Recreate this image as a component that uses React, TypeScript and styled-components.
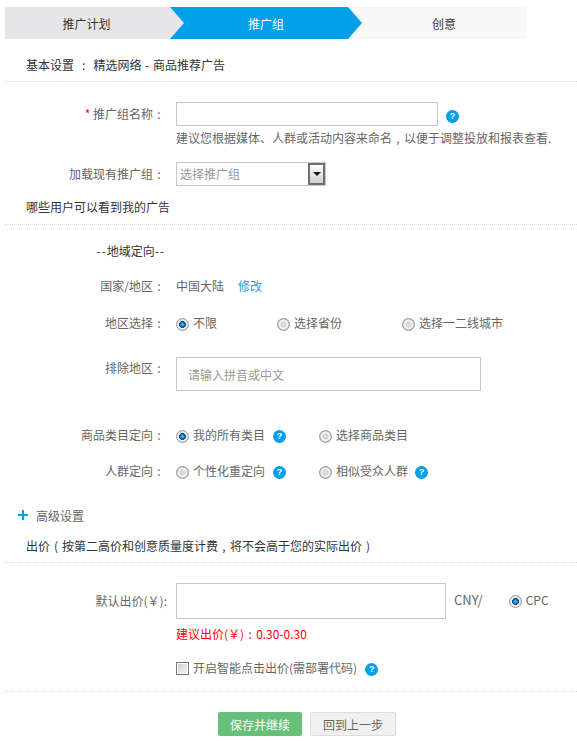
import styled, { createGlobalStyle } from 'styled-components';

const GlobalStyle = createGlobalStyle`
	html, body {
		margin: 0;
		padding: 0;
		background: #fff;
	}
	body {
		font-family: 'Noto Sans CJK SC', 'Liberation Sans', sans-serif;
		font-size: 12px;
		color: #666;
	}
`;

const App = () => (
	<>
		<GlobalStyle />
		<Page>
			<Steps>
				<Step $bg="#e6e6ea" $width="165px" $color="#333">
					推广计划
				</Step>
				<Step $bg="#00a0e9" $width="178px" $color="#fff" $offset>
					推广组
				</Step>
				<Step $bg="#f8f8f8" $color="#333" $offset $last>
					创意
				</Step>
			</Steps>

			<SectionTitle $top={16}>
				基本设置 <Punct>:</Punct> 精选网络 - 商品推荐广告
			</SectionTitle>

			<Row $top={20} $height={24}>
				<Label>
					<Required>*</Required> 推广组名称<Punct>:</Punct>
				</Label>
				<TextInput $width={262} />
				<HelpIcon $left={8} $down={8}>?</HelpIcon>
			</Row>
			<Hint>
				建议您根据媒体、人群或活动内容来命名<Punct>,</Punct>以便于调整投放和报表查看.
			</Hint>

			<Row $top={14} $height={24}>
				<Label>
					加载现有推广组<Punct>:</Punct>
				</Label>
				<SelectBox>
					<SelectText>选择推广组</SelectText>
					<SelectArrow />
				</SelectBox>
			</Row>

			<SectionTitle $top={11} $pad={7}>哪些用户可以看到我的广告</SectionTitle>

			<Row $top={16} $height={20}>
				<Label $dark>
					<Dash>--</Dash>地域定向<Dash>--</Dash>
				</Label>
			</Row>
			<Row $top={15} $height={20}>
				<Label>
					国家/地区<Punct>:</Punct>
				</Label>
				<span>中国大陆</span>
				<EditLink href="#">修改</EditLink>
			</Row>
			<Row $top={17} $height={20}>
				<Label>
					地区选择<Punct>:</Punct>
				</Label>
				<Option $width={101}>
					<Radio $checked />
					不限
				</Option>
				<Option $width={125}>
					<Radio />
					选择省份
				</Option>
				<Option>
					<Radio />
					选择一二线城市
				</Option>
			</Row>
			<Row $top={24} $height={34}>
				<Label $alignTop>
					排除地区<Punct>:</Punct>
				</Label>
				<TextInput $width={305} $pad={11} placeholder="请输入拼音或中文" />
			</Row>
			<Row $top={34} $height={20}>
				<Label>
					商品类目定向<Punct>:</Punct>
				</Label>
				<Option $width={143}>
					<Radio $checked />
					我的所有类目
					<HelpIcon $left={8} $down={5}>?</HelpIcon>
				</Option>
				<Option>
					<Radio />
					选择商品类目
				</Option>
			</Row>
			<Row $top={16} $height={20}>
				<Label>
					人群定向<Punct>:</Punct>
				</Label>
				<Option $width={143}>
					<Radio />
					个性化重定向
					<HelpIcon $left={8} $down={5}>?</HelpIcon>
				</Option>
				<Option>
					<Radio />
					相似受众人群
					<HelpIcon $left={7} $down={5}>?</HelpIcon>
				</Option>
			</Row>

			<Advanced>
				<PlusIcon viewBox="0 0 10 10">
					<path d="M4 0h2v4h4v2H6v4H4V6H0V4h4z" fill="#00a0e9" />
				</PlusIcon>
				高级设置
			</Advanced>

			<SectionTitle $top={11}>
				出价<Punct>(</Punct>按第二高价和创意质量度计费<Punct>,</Punct>将不会高于您的实际出价<Punct>)</Punct>
			</SectionTitle>

			<Row $top={20} $height={36}>
				<Label $wide>默认出价(￥):</Label>
				<TextInput $width={270} />
				<Unit>CNY/</Unit>
				<Option $top={7}>
					<Radio $checked />
					CPC
				</Option>
			</Row>
			<Suggest>
				建议出价(￥)<Punct>:</Punct>0.30-0.30
			</Suggest>
			<Row $top={14} $height={20}>
				<Label />
				<Option>
					<Checkbox />
					开启智能点击出价(需部署代码)
					<HelpIcon $left={8} $down={5}>?</HelpIcon>
				</Option>
			</Row>

			<Divider />

			<Actions>
				<PrimaryButton>保存并继续</PrimaryButton>
				<SecondaryButton>回到上一步</SecondaryButton>
			</Actions>
		</Page>
	</>
);

const Page = styled.div`
	width: 577px;
	height: 741px;
	overflow: hidden;
	padding-top: 7px;
	box-sizing: border-box;
`;

const Steps = styled.div`
	display: flex;
	width: 521px;
	height: 32px;
	margin-left: 5px;
`;

const Step = styled.div<{ $bg: string; $color: string; $width?: string; $offset?: boolean; $last?: boolean }>`
	position: relative;
	display: flex;
	align-items: center;
	justify-content: center;
	box-sizing: border-box;
	flex: ${(props) => (props.$width ? `0 0 ${props.$width}` : '1')};
	padding-left: ${(props) => (props.$offset ? '14px' : '0')};
	padding-right: ${(props) => (props.$offset ? '0' : '2px')};
	background: ${(props) => props.$bg};
	color: ${(props) => props.$color};

	&::after {
		content: '';
		display: ${(props) => (props.$last ? 'none' : 'block')};
		position: absolute;
		left: 100%;
		top: 0;
		z-index: 1;
		border-style: solid;
		border-width: 16px 0 16px 14px;
		border-color: transparent transparent transparent ${(props) => props.$bg};
	}
`;

// punctuation centred in a full-width cell, as the original font draws it
const Punct = styled.span`
	display: inline-block;
	width: 12px;
	text-align: center;
`;

const SectionTitle = styled.div<{ $top: number; $pad?: number }>`
	margin: ${(props) => props.$top}px 0 0 5px;
	padding: 0 0 ${(props) => props.$pad ?? 6}px 21px;
	line-height: 20px;
	word-spacing: 1px;
	color: #333;
	border-bottom: 1px dotted #d8d8d8;
`;

const Row = styled.div<{ $top: number; $height: number }>`
	display: flex;
	align-items: flex-start;
	margin-top: ${(props) => props.$top}px;
	height: ${(props) => props.$height}px;
	line-height: 20px;
`;

const Label = styled.div<{ $dark?: boolean; $alignTop?: boolean; $wide?: boolean }>`
	flex: 0 0 ${(props) => (props.$wide ? '167px' : '165px')};
	margin-right: ${(props) => (props.$wide ? '9px' : '11px')};
	align-self: ${(props) => (props.$alignTop ? 'flex-start' : 'center')};
	margin-top: ${(props) => (props.$alignTop ? '1px' : '0')};
	text-align: right;
	color: ${(props) => (props.$dark ? '#333' : '#666')};
`;

const Dash = styled.span`
	letter-spacing: 1px;
`;

const Required = styled.span`
	color: #f00;
`;

const TextInput = styled.input<{ $width: number; $pad?: number }>`
	box-sizing: border-box;
	width: ${(props) => props.$width}px;
	height: 100%;
	margin: 0;
	padding: 0 ${(props) => props.$pad ?? 4}px;
	border: 1px solid #c8c8c8;
	outline: none;
	font: inherit;
	color: #666;

	&::placeholder {
		color: #999;
		opacity: 1;
	}
`;

const HelpIcon = styled.span<{ $left: number; $down: number }>`
	flex: none;
	display: inline-block;
	width: 13px;
	height: 13px;
	margin-left: ${(props) => props.$left}px;
	margin-top: ${(props) => props.$down}px;
	border-radius: 50%;
	background: #00a0e9;
	color: #fff;
	font: bold 9px/13px 'Liberation Sans', sans-serif;
	text-align: center;
`;

const Hint = styled.div`
	margin: 2px 0 0 176px;
	line-height: 20px;
	white-space: nowrap;
`;

const SelectBox = styled.div`
	display: flex;
	align-items: center;
	justify-content: space-between;
	box-sizing: border-box;
	width: 150px;
	height: 100%;
	padding: 0 0 0 3px;
	border: 1px solid #c8c8c8;
`;

const SelectText = styled.span`
	color: #999;
`;

const SelectArrow = styled.span`
	display: flex;
	align-items: center;
	justify-content: center;
	box-sizing: border-box;
	width: 17px;
	height: 22px;
	border: 2px solid #707070;
	background: linear-gradient(#fff, #cfcfcf);

	&::before {
		content: '';
		border-style: solid;
		border-width: 4px 4px 0;
		border-color: #111 transparent transparent;
	}
`;

const EditLink = styled.a`
	margin-left: 14px;
	color: #2a9be8;
	text-decoration: none;
`;

const Option = styled.label<{ $width?: number; $top?: number }>`
	display: flex;
	align-items: flex-start;
	flex: ${(props) => (props.$width ? `0 0 ${props.$width}px` : 'none')};
	margin-top: ${(props) => props.$top ?? 0}px;
	white-space: nowrap;
`;

const Radio = styled.span<{ $checked?: boolean }>`
	flex: none;
	box-sizing: border-box;
	width: 13px;
	height: 13px;
	margin: 5px 4px 0 0;
	border-radius: 50%;
	border: 1px solid #9a9a9a;
	background: ${(props) =>
		props.$checked
			? 'radial-gradient(circle closest-side, #8fd0f5 0, #0a84cf 30%, #0b4f80 58%, #f2f2f2 68%, #dcdcdc 100%)'
			: 'radial-gradient(circle closest-side, #dedede 0, #d6d6d6 50%, #fafafa 68%, #e8e8e8 85%, #bbb 100%)'};
`;

const Checkbox = styled.span`
	flex: none;
	box-sizing: border-box;
	width: 13px;
	height: 13px;
	margin: 4px 4px 0 0;
	border: 1px solid #777;
	background: linear-gradient(135deg, #cfcfcf, #f6f6f6);
	box-shadow: inset 0 0 0 1px #fff;
`;

const Advanced = styled.div`
	display: flex;
	align-items: center;
	margin: 24px 0 0 18px;
	height: 20px;
`;

const PlusIcon = styled.svg`
	width: 10px;
	height: 10px;
	margin-right: 8px;
`;

const Unit = styled.span`
	margin: 7px 26px 0 8px;
	font-size: 13px;
`;

const Suggest = styled.div`
	margin: 5px 0 0 176px;
	line-height: 20px;
	color: #f00;
`;

const Divider = styled.div`
	margin: 13px 0 0 5px;
	border-bottom: 1px dotted #d8d8d8;
`;

const Actions = styled.div`
	display: flex;
	gap: 8px;
	margin: 20px 0 0 218px;
`;

const PrimaryButton = styled.button`
	box-sizing: border-box;
	width: 84px;
	height: 24px;
	padding: 0;
	border: none;
	border-radius: 2px;
	background: #66c07a;
	color: #fff;
	font: inherit;
`;

const SecondaryButton = styled.button`
	box-sizing: border-box;
	width: 86px;
	height: 24px;
	padding: 0;
	border: 1px solid #ddd;
	border-radius: 2px;
	background: #f0f0f0;
	color: #666;
	font: inherit;
`;

export default App;
